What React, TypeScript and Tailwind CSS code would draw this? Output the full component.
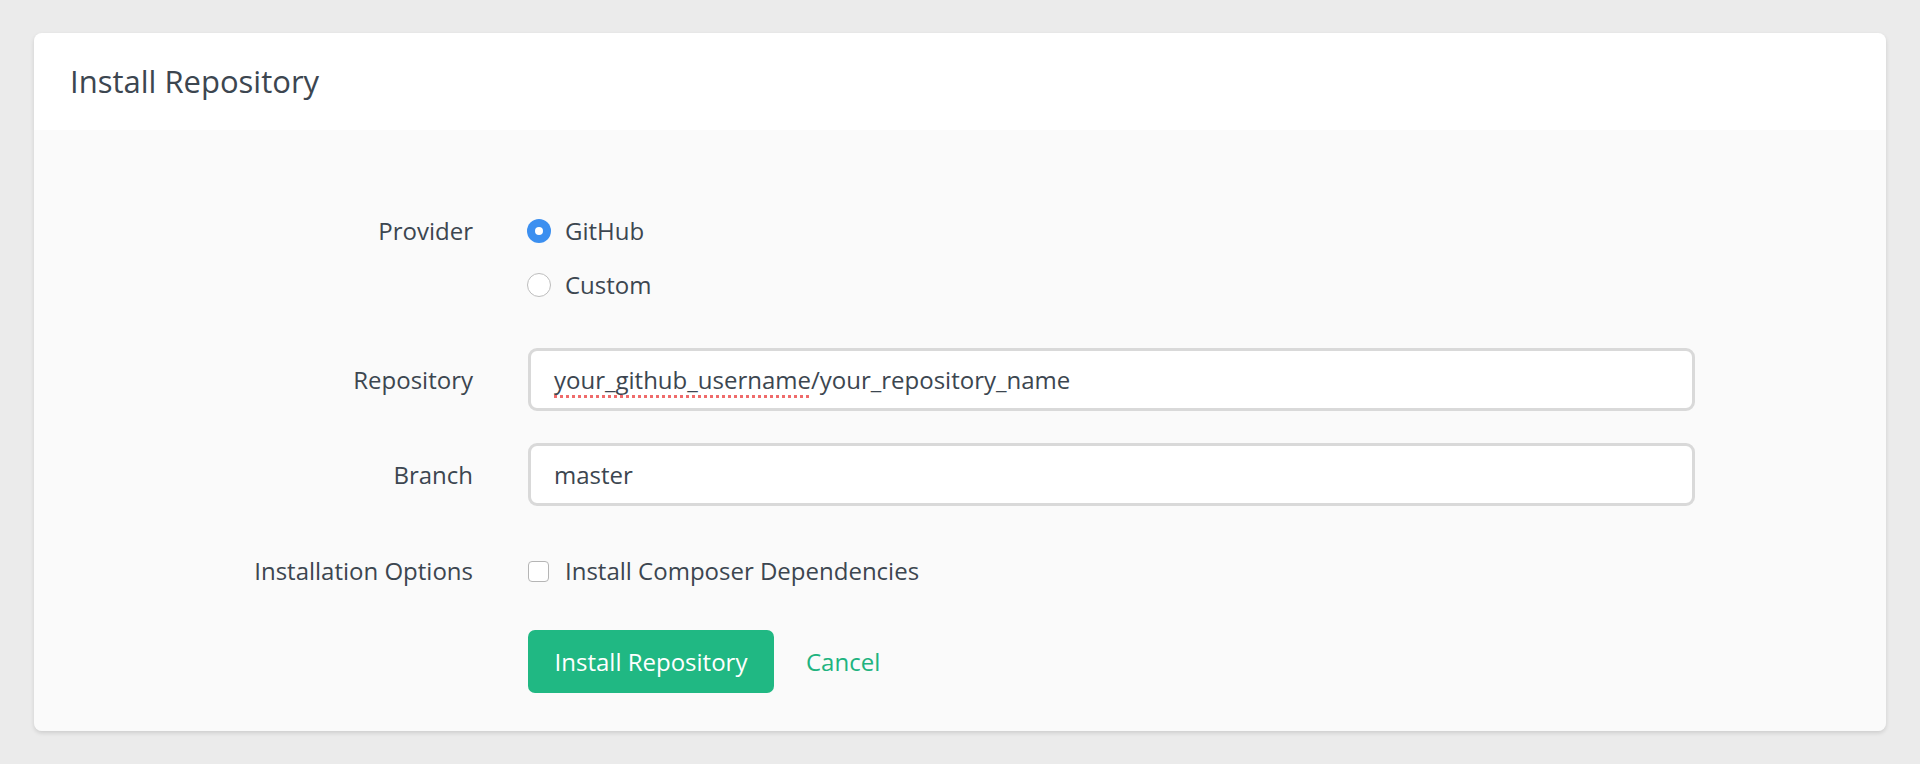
import { useState } from 'react';

const FONT = { fontFamily: '"Open Sans", "Noto Sans", sans-serif' };

function Radio({ checked, label, onClick }: { checked: boolean; label: string; onClick: () => void }) {
  return (
    <button type="button" onClick={onClick} className="flex items-center h-[34px] text-left">
      {checked ? (
        <span className="w-[24px] h-[24px] rounded-full bg-[#3b8ff0] flex items-center justify-center">
          <span className="w-[8px] h-[8px] rounded-full bg-white" />
        </span>
      ) : (
        <span className="w-[24px] h-[24px] rounded-full bg-white border-[1.5px] border-[#bdbdbd]" />
      )}
      <span className="ml-[14px]">{label}</span>
    </button>
  );
}

export default function App() {
  const [provider, setProvider] = useState<'github' | 'custom'>('github');
  const [composer, setComposer] = useState(false);

  return (
    <div className="min-h-screen bg-[#ebebeb] px-[34px] pt-[33px] pb-[33px] text-[#3c4650]" style={FONT}>
      <div className="rounded-[8px] overflow-hidden shadow-[0_2px_4px_rgba(0,0,0,0.13)]">
        {/* Header */}
        <div className="h-[97px] bg-white px-[36px] flex items-center">
          <h1 className="text-[31px] leading-none">Install Repository</h1>
        </div>

        {/* Body */}
        <div className="bg-[#fafafa] pt-[84px] pb-[38px] text-[24px]">
          {/* Provider */}
          <div className="flex items-start">
            <div className="w-[439px] text-right leading-[34px]">Provider</div>
            <div className="ml-[54px] flex flex-col gap-[20px]">
              <Radio checked={provider === 'github'} label="GitHub" onClick={() => setProvider('github')} />
              <Radio checked={provider === 'custom'} label="Custom" onClick={() => setProvider('custom')} />
            </div>
          </div>

          {/* Repository */}
          <div className="flex items-center mt-[46px]">
            <div className="w-[439px] text-right">Repository</div>
            <div className="ml-[55px] w-[1167px] h-[63px] bg-white border-[3px] border-[#d9d9d9] rounded-[9px] pl-[23px] flex items-center">
              <span>
                <span className="underline decoration-dotted decoration-[#ef6b6b] decoration-[3px] underline-offset-[6px]">your_github_username</span>
                /your_repository_name
              </span>
            </div>
          </div>

          {/* Branch */}
          <div className="flex items-center mt-[32px]">
            <div className="w-[439px] text-right">Branch</div>
            <div className="ml-[55px] w-[1167px] h-[63px] bg-white border-[3px] border-[#d9d9d9] rounded-[9px] pl-[23px] flex items-center">
              master
            </div>
          </div>

          {/* Installation Options */}
          <div className="flex items-center mt-[48px] h-[34px]">
            <div className="w-[439px] text-right">Installation Options</div>
            <button type="button" onClick={() => setComposer(!composer)} className="ml-[55px] flex items-center">
              <span
                className={`w-[21px] h-[21px] rounded-[4px] border ${
                  composer ? 'bg-[#3b8ff0] border-[#3b8ff0]' : 'bg-white border-[#b5b5b5]'
                }`}
              />
              <span className="ml-[16px]">Install Composer Dependencies</span>
            </button>
          </div>

          {/* Actions */}
          <div className="flex items-center mt-[42px]">
            <div className="w-[439px]" />
            <button
              type="button"
              className="ml-[55px] w-[246px] h-[63px] rounded-[7px] bg-[#20b883] text-white"
            >
              Install Repository
            </button>
            <button type="button" className="ml-[32px] text-[#20b37f]">
              Cancel
            </button>
          </div>
        </div>
      </div>
    </div>
  );
}
